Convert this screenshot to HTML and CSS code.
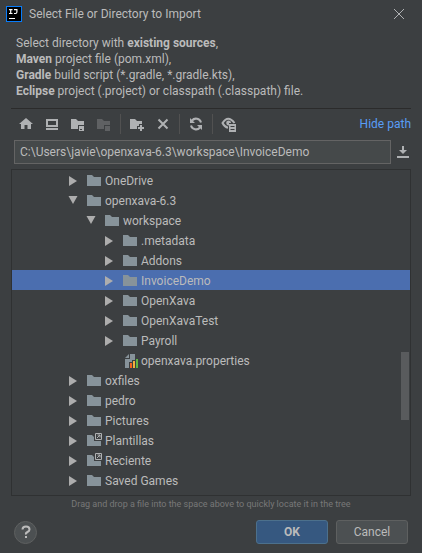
FILE: index.html
```html
<!DOCTYPE html>
<html lang="en">
<head>
<meta charset="utf-8">
<meta name="viewport" content="width=device-width, initial-scale=1">
<title>Select File or Directory to Import</title>
<link rel="stylesheet" href="styles.css">
</head>
<body>
<svg class="sprite" aria-hidden="true">
  <symbol id="folder" viewBox="0 0 16 16"><path d="M1 2h5l2 2h7v9H1z"/></symbol>
  <symbol id="link-folder" viewBox="0 0 16 16"><path d="M1 2h5l2 2v4h7v5H1z"/><path class="mark" d="M9.500.500h6v6h-6zM11 5l3-3M11.500 2H14v2.500"/></symbol>
  <symbol id="right" viewBox="0 0 16 16"><path d="M4 3l8 5-8 5z"/></symbol>
  <symbol id="down" viewBox="0 0 16 16"><path d="M3.500 3h9L8 11z"/></symbol>
</svg>
<main class="dialog">
  <header class="titlebar">
    <svg class="logo" viewBox="0 0 16 16" aria-hidden="true"><path fill="#087cfa" d="M0 0h16v16H0z"/><path d="M1 1h14v14H1z"/><path fill="none" stroke="#fff" stroke-width="1.200" d="M3 3.600h3.500M4.700 3.500v4M3 7.500h3.500M8 3.600h2.900V6q0 1.500-1.400 1.500H8"/><path fill="#fff" d="M3 12h6v1H3z"/></svg>
    <h1 class="title">Select File or Directory to Import</h1>
    <button class="close" type="button" aria-label="Close"><svg viewBox="0 0 10 10"><path d="M0 0l10 10M10 0L0 10"/></svg></button>
  </header>
  <p class="intro">Select directory with <b>existing sources</b>,<br><b>Maven</b> project file (pom.xml),<br><b>Gradle</b> build script (*.gradle, *.gradle.kts),<br><b>Eclipse</b> project (.project) or classpath (.classpath) file.</p>
  <nav class="toolbar" aria-label="File actions">
    <button class="tool" type="button" aria-label="Home"><svg viewBox="0 0 16 16"><path d="M8 2l7 6h-2v5H9.500V9h-3v4H3V8H1z"/></svg></button>
    <button class="tool" type="button" aria-label="Desktop"><svg viewBox="0 0 16 16"><path fill-rule="evenodd" d="M2 3h12v8H2zM4 5v4h8V5zM2 12h12v2H2z"/></svg></button>
    <button class="tool" type="button" aria-label="Project directory"><svg viewBox="0 0 16 16"><path fill-rule="evenodd" d="M1 3h5l2 2h6v4H8v4H1zM9 10h5v5H9zM10 13v1h2v-1z"/></svg></button>
    <button class="tool" type="button" aria-label="Module directory" disabled><svg viewBox="0 0 16 16"><path d="M1 3h5l2 2h6v4H8v4H1zM9 10h5v5H9z"/></svg></button>
    <span class="divider"></span>
    <button class="tool" type="button" aria-label="New folder"><svg viewBox="0 0 16 16"><path d="M1 3h5l2 2h5v3h-3v2H8v3H1zM11 9h2v2h2v2h-2v2h-2v-2H9v-2h2z"/></svg></button>
    <button class="tool" type="button" aria-label="Delete"><svg viewBox="0 0 16 16"><path class="line" d="M3.500 3.500l9 9M12.500 3.500l-9 9"/></svg></button>
    <span class="divider"></span>
    <button class="tool" type="button" aria-label="Refresh"><svg viewBox="0 0 16 16"><path class="line" d="M13 6.500A5.200 5.200 0 0 0 4 4.500M3 9.500a5.200 5.200 0 0 0 9 2"/><path d="M2 2v5h5zM14 14V9H9z"/></svg></button>
    <span class="divider"></span>
    <button class="tool" type="button" aria-label="Show hidden files"><svg viewBox="0 0 16 16"><path class="line" d="M7 11.800Q3.500 11 1.500 7q5.500-8.500 12 0"/><path d="M7.500 4.500A2.500 2.500 0 0 1 10 7H8v2.500a2.500 2.500 0 0 1-.5-5z"/><path fill-rule="evenodd" d="M8 8h7v8H8zM9.500 10v1h4v-1zM9.500 13v1h4v-1z"/></svg></button>
    <a class="hide" href="#path">Hide path</a>
  </nav>
  <div class="pathrow">
    <input class="path" id="path" type="text" aria-label="Path" value="C:\Users\javie\openxava-6.3\workspace\InvoiceDemo">
    <button class="history" type="button" aria-label="Recent paths"><svg viewBox="0 0 12 12"><path d="M5 0h2v4h3L6 8 2 4h3zM0 10h12v2H0z"/></svg></button>
  </div>
  <div class="tree">
    <ul class="rows" role="tree" aria-label="Files">
      <li class="row" role="treeitem"><svg class="arrow"><use href="#right"/></svg><svg class="folder"><use href="#folder"/></svg>OneDrive</li>
      <li class="row" role="treeitem"><svg class="arrow"><use href="#down"/></svg><svg class="folder"><use href="#folder"/></svg>openxava-6.3</li>
      <li class="row level2" role="treeitem"><svg class="arrow"><use href="#down"/></svg><svg class="folder"><use href="#folder"/></svg>workspace</li>
      <li class="row level3" role="treeitem"><svg class="arrow"><use href="#right"/></svg><svg class="folder"><use href="#folder"/></svg>.metadata</li>
      <li class="row level3" role="treeitem"><svg class="arrow"><use href="#right"/></svg><svg class="folder"><use href="#folder"/></svg>Addons</li>
      <li class="row level3 selected" role="treeitem" aria-selected="true"><svg class="arrow"><use href="#right"/></svg><svg class="folder"><use href="#folder"/></svg>InvoiceDemo</li>
      <li class="row level3" role="treeitem"><svg class="arrow"><use href="#right"/></svg><svg class="folder"><use href="#folder"/></svg>OpenXava</li>
      <li class="row level3" role="treeitem"><svg class="arrow"><use href="#right"/></svg><svg class="folder"><use href="#folder"/></svg>OpenXavaTest</li>
      <li class="row level3" role="treeitem"><svg class="arrow"><use href="#right"/></svg><svg class="folder"><use href="#folder"/></svg>Payroll</li>
      <li class="row level3" role="treeitem"><svg class="arrow"></svg><svg class="folder" viewBox="0 0 16 16"><path d="M8 1h5v6h-3v2H7v6H3V6h5zM7 1v4H3z"/><path fill="#f26522" d="M8 10h2v5H8z"/><path fill="#f4af3d" d="M11 8h2v7h-2z"/><path fill="#62b543" d="M14 6h2v9h-2z"/></svg>openxava.properties</li>
      <li class="row" role="treeitem"><svg class="arrow"><use href="#right"/></svg><svg class="folder"><use href="#folder"/></svg>oxfiles</li>
      <li class="row" role="treeitem"><svg class="arrow"><use href="#right"/></svg><svg class="folder"><use href="#folder"/></svg>pedro</li>
      <li class="row" role="treeitem"><svg class="arrow"><use href="#right"/></svg><svg class="folder"><use href="#folder"/></svg>Pictures</li>
      <li class="row" role="treeitem"><svg class="arrow"><use href="#right"/></svg><svg class="folder"><use href="#link-folder"/></svg>Plantillas</li>
      <li class="row" role="treeitem"><svg class="arrow"><use href="#right"/></svg><svg class="folder"><use href="#link-folder"/></svg>Reciente</li>
      <li class="row" role="treeitem"><svg class="arrow"><use href="#right"/></svg><svg class="folder"><use href="#folder"/></svg>Saved Games</li>
      <li class="row" role="treeitem"><svg class="arrow"></svg><svg class="folder"><use href="#folder"/></svg></li>
    </ul>
    <span class="thumb"></span>
  </div>
  <p class="hint">Drag and drop a file into the space above to quickly locate it in the tree</p>
  <footer class="actions">
    <button class="help" type="button" aria-label="Help"><svg viewBox="0 0 10 14"><path d="M1.500 4.500Q1.500 1.500 5 1.500t3.500 3Q8.500 6 6.500 7T5 9.500"/><path d="M5 11v2"/></svg></button>
    <button class="button primary" type="button">OK</button>
    <button class="button" type="button">Cancel</button>
  </footer>
</main>
</body>
</html>
```
FILE: styles.css
```css
* { box-sizing: border-box; }
body {
  margin: 0;
  background: #3c3f41;
  color: #bbbbbb;
  font: 12px/16px Roboto, "Open Sans", sans-serif;
}
button, input { font: inherit; color: inherit; }
button { padding: 0; border: 0; background: none; }
svg { display: block; flex: none; }
.sprite { position: absolute; width: 0; height: 0; }
.dialog { display: flex; flex-direction: column; height: 100vh; min-height: 320px; }

.titlebar { display: flex; align-items: center; gap: 7px; height: 27px; padding: 0 18px 0 6px; }
.logo { width: 16px; height: 16px; }
.title { flex: 1; margin: 0; font-size: 12px; font-weight: 400; }
.close svg { width: 10px; height: 10px; fill: none; stroke: #afb1b3; overflow: visible; }

.intro { margin: 8px 11px 0; padding: 0 5px 9px; border-bottom: 1px solid #2b2b2b; }

.toolbar { display: flex; align-items: center; gap: 10px; height: 31px; padding: 0 11px 2px 18px; }
.tool svg { width: 16px; height: 16px; fill: #afb1b3; }
.tool:disabled svg { fill: #5f6163; }
.tool .line { fill: none; stroke: #afb1b3; stroke-width: 2; }
.divider { width: 1px; height: 20px; margin: 0 -2px; background: #515151; }
.hide { margin-left: auto; color: #589df6; text-decoration: none; }

.pathrow { display: flex; align-items: center; gap: 6px; padding: 0 13px 0 14px; }
.path { flex: 1; min-width: 0; height: 24px; padding: 0 5px; border: 1px solid #646464; border-radius: 0; background: #45494a; outline: 0; }
.history svg { width: 12px; height: 12px; fill: #afb1b3; }

.tree { position: relative; flex: 1; min-height: 0; margin: 5px 11px 0; border: 1px solid #2f3132; overflow: hidden; }
.rows { margin: 0; padding: 0; list-style: none; }
.row { display: flex; align-items: center; height: 20px; padding: 1px 0 0 53px; }
.level2 { padding-left: 71px; }
.level3 { padding-left: 89px; }
.selected { background: #4b6eaf; }
.arrow { width: 16px; height: 16px; margin-right: 5px; fill: #adadad; }
.folder { width: 16px; height: 16px; margin-right: 3px; fill: #87939a; }
.mark { fill: none; stroke: #afb1b3; }
.thumb { position: absolute; top: 56%; right: 1px; width: 8px; height: 21%; background: #595b5d; }

.hint { margin: 0; color: #787878; font-size: 9px; text-align: center; }
.actions { display: flex; align-items: center; gap: 8px; padding: 8px 14px 9px; }
.help { display: grid; place-items: center; width: 23px; height: 23px; margin-right: auto; border: 1px solid #5e6060; border-radius: 50%; background: #4c5052; }
.help svg { width: 10px; height: 14px; fill: none; stroke: #bbbbbb; stroke-width: 2; }
.button { width: 72px; height: 24px; border: 1px solid #5e6060; border-radius: 3px; background: #4c5052; }
.primary { border-color: #4c708c; background: #365880; font-weight: 700; }
```
